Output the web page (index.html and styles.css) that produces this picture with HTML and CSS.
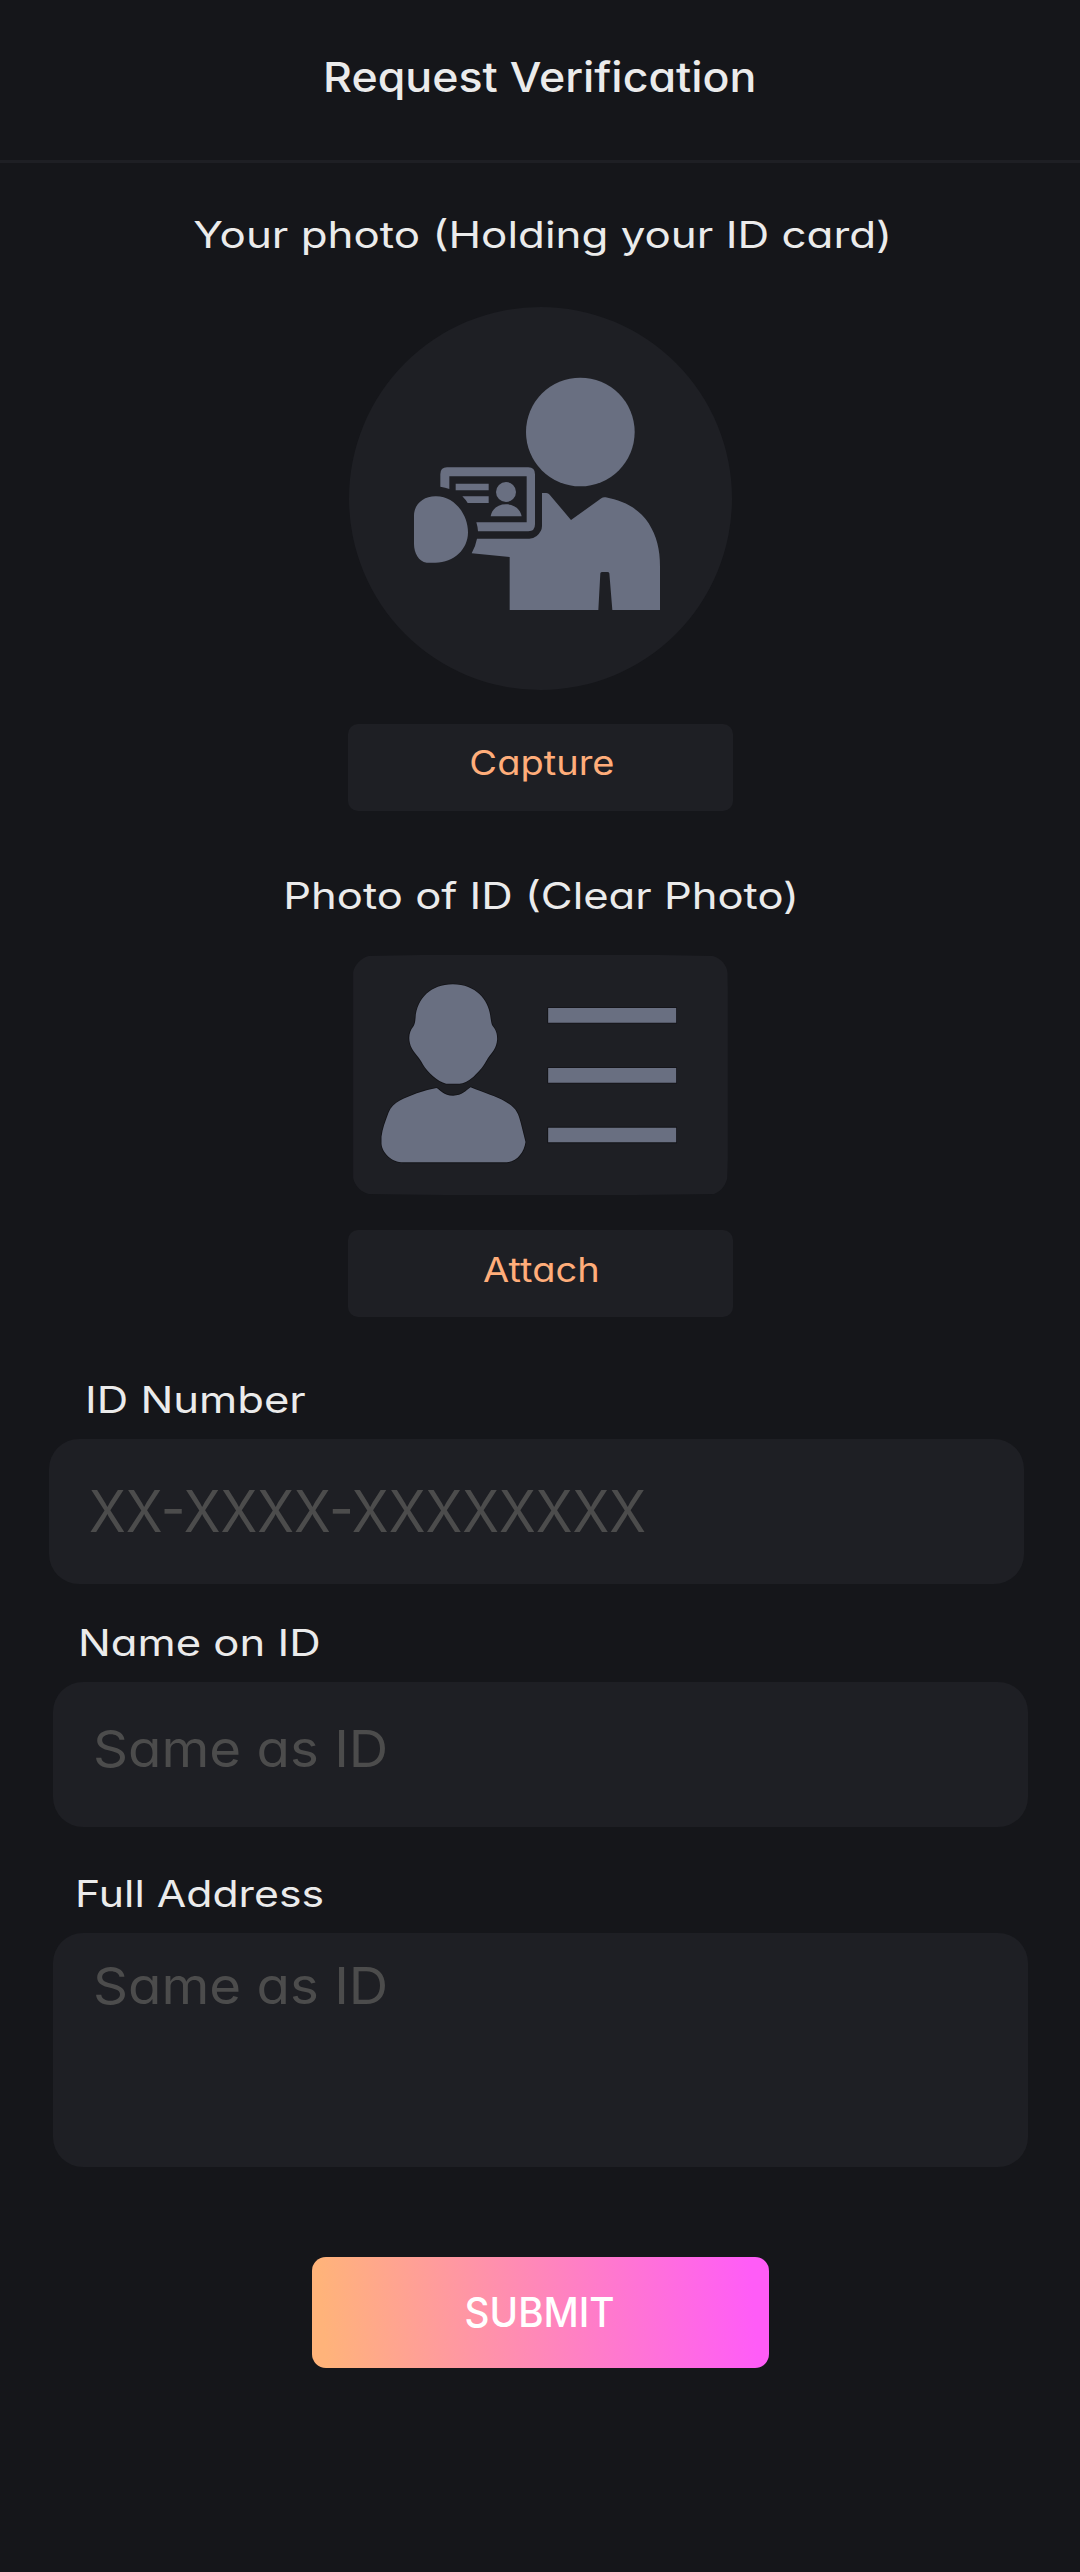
FILE: index.html
```html
<!DOCTYPE html>
<html lang="en">
<head>
<meta charset="utf-8">
<title>Request Verification</title>
<link rel="stylesheet" href="styles.css">
</head>
<body>
<header class="header"><h1 class="title"><span class="text">Request Verification</span></h1></header>
<main class="page">
  <section class="upload upload-selfie">
    <h2 class="heading heading-selfie"><span class="text">Your photo (Holding your ID card)</span></h2>
    <svg class="selfie" viewBox="57 51 1149 1149" aria-hidden="true">
      <circle class="surface" cx="631.500" cy="625.500" r="574.500"/>
      <g class="shape">
        <circle cx="751" cy="426" r="163"/>
        <path d="M636 609H649Q655 609 659 614L723 690L814 625Q820 620 827 622C880 632 927 655 956 700C980 739 990 778 990 830V960H847L838 850Q837 846 832 846H817Q812 846 811 850L805 960H539V801L425 790Q437 768 441 746H598Q610 746 620 738Q636 724 636 708Z"/>
        <path d="M316 619C372 617 414 672 414 727C414 778 372 818 316 818H290C266 815 252 789 252 762V677C252 642 281 619 316 619Z"/>
        <path d="M331 590V553Q331 532 351 532H595Q615 532 615 553V703Q615 724 595 724H444Q443 710 439 697H590V559H358V597Q346 592 331 590Z"/>
        <path d="M377 581H476V601H377ZM397 619H476V639H413Q407 629 397 619Z"/>
        <circle cx="528" cy="606" r="30"/>
        <path d="M482 679C486 655 505 643 528 643S570 655 575 679Z"/>
      </g>
    </svg>
    <button class="action" type="button"><span class="text">Capture</span></button>
  </section>
  <section class="upload upload-id">
    <h2 class="heading heading-id"><span class="text">Photo of ID (Clear Photo)</span></h2>
    <svg class="card" viewBox="39 45 1124 720" aria-hidden="true">
      <path class="surface" d="M85 48L240 45H960L1118 48C1142 55 1160 75 1162 98L1163 160V650L1161 716C1154 739 1140 757 1118 762L890 765H310L85 762C63 756 44 738 39 714V96C43 75 62 55 85 48Z"/>
      <g class="shape outlined">
        <path d="M338 133C407 133 444 181 450 225Q453 250 456 256C467 270 471 279 471 298C469 326 456 337 443 355C430 379 418 394 400 410Q375 431 358 431H318C292 425 263 398 248 373C236 350 224 342 215 325C202 298 207 275 219 260Q225 253 226 235C230 176 271 133 338 133Z"/>
        <path d="M289 444C300 449 310 467 339 467C366 467 378 451 391 442C432 459 466 468 496 485C529 504 534 519 542 550Q552 590 556 606C552 636 532 664 500 667H190C154 667 126 638 124 611V590C127 565 135 545 145 518C158 485 195 474 230 460Q255 450 289 444Z"/>
        <path d="M624 204H1008V248H624ZM624 384H1008V428H624ZM624 563H1008V607H624Z"/>
      </g>
    </svg>
    <button class="action action-attach" type="button"><span class="text">Attach</span></button>
  </section>
  <form class="form">
    <div class="field field-number">
      <div class="label"><span class="text">ID Number</span></div>
      <div class="input"><span class="text">XX-XXXX-XXXXXXXX</span></div>
    </div>
    <div class="field field-name">
      <div class="label"><span class="text">Name on ID</span></div>
      <div class="input"><span class="text">Same as ID</span></div>
    </div>
    <div class="field field-address">
      <div class="label"><span class="text">Full Address</span></div>
      <div class="input"><span class="text">Same as ID</span></div>
    </div>
    <button class="submit" type="button"><span class="text">SUBMIT</span></button>
  </form>
</main>
</body>
</html>
```
FILE: styles.css
```css
* { box-sizing: border-box; }

body {
  margin: 0;
  min-height: 2572px;
  background: #15161a;
  color: #ebebeb;
  font-family: Inter, "Liberation Sans", sans-serif;
  font-feature-settings: "cv11" 1;
}

h1, h2 { margin: 0; }

.text {
  display: inline-block;
  white-space: nowrap;
}

.header {
  height: 163px;
  padding-top: 47px;
  border-bottom: 3px solid #1e1f24;
  text-align: center;
}

.title { font-size: 41px; font-weight: 500; line-height: 60px; }
.title .text { transform: scaleX(1.09); }

.upload {
  display: flex;
  flex-direction: column;
  align-items: center;
}

.heading { font-size: 36.5px; font-weight: 400; line-height: 50px; }
.upload-selfie { padding-top: 47px; }
.upload-id { padding-top: 60px; }
.heading-selfie { padding-left: 5px; }
.heading-selfie .text { transform: scaleX(1.2025); }
.heading-id { padding-left: 2px; }
.heading-id .text { transform: scaleX(1.193); }

.surface { fill: #1e1f24; }
.shape { fill: #696f81; }
.outlined { stroke: #131317; stroke-width: 5px; paint-order: stroke; }

.selfie { width: 383px; height: 383px; margin: 47px 0 34px; }
.card { width: 375px; height: 240px; margin: 34px 0 35px; }

.action {
  width: 385px;
  height: 87px;
  padding: 19px 0 0 3px;
  display: flex;
  justify-content: center;
  align-items: flex-start;
  border: 0;
  border-radius: 10px;
  background: #1e1f24;
  color: #ffad7a;
  font: 400 33.5px/40px Inter, sans-serif;
  font-feature-settings: "cv11" 1;
}
.action .text { transform: scaleX(1.135); }
.action-attach { padding-top: 20px; }

.form {
  display: flex;
  flex-direction: column;
  padding: 58px 52px 0 53px;
}

.label {
  margin-bottom: 14px;
  font-size: 36.5px;
  line-height: 50px;
}
.form .field .text { transform-origin: left; }
.label .text { transform: scaleX(1.194); }

.input {
  height: 145px;
  padding: 36px 40px 0;
  border-radius: 30px;
  background: #1e1f24;
  color: #4c4c4c;
  font-size: 51px;
  line-height: 62px;
}
.input .text { transform: scaleX(1.071); }

.field-number { margin: 0 4px 34px -4px; }
.field-number .label { padding-left: 36px; }
.field-number .input { padding-top: 37px; font-size: 57.5px; line-height: 70px; }
.field-number .input .text { transform: scaleX(0.9376); }
.field-name { margin-bottom: 42px; }
.field-name .label { padding-left: 25px; }
.field-address .label { padding-left: 22px; }
.field-address .label .text { transform: scaleX(1.171); }
.field-address .input { height: 234px; padding-top: 22px; }

.submit {
  align-self: center;
  width: 457px;
  height: 111px;
  margin-top: 90px;
  padding: 31px 2px 0 0;
  display: flex;
  justify-content: center;
  align-items: flex-start;
  border: 0;
  border-radius: 14px;
  background: linear-gradient(86deg, #ffb37a 3%, #ff5cf7 96%);
  color: #fff;
  font: 500 40.5px/50px Inter, sans-serif;
}
.submit .text { transform: scaleX(0.954); }
```
